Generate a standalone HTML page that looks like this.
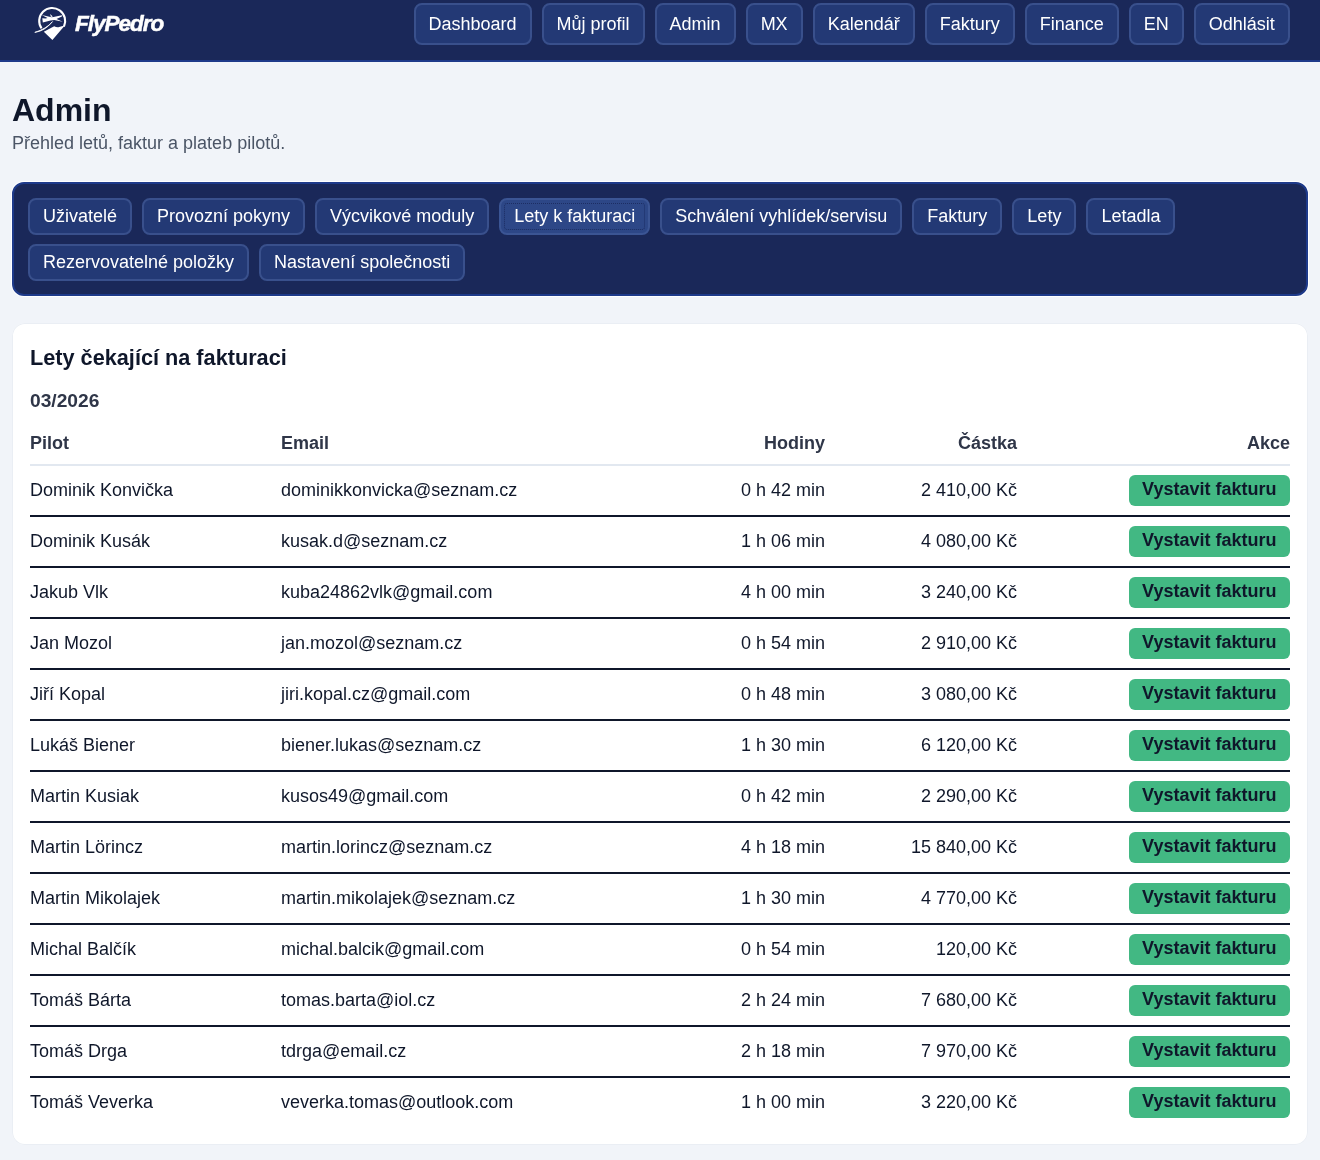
<!DOCTYPE html>
<html lang="cs">
<head>
<meta charset="utf-8">
<title>FlyPedro Admin</title>
<style>
*{box-sizing:border-box;}
html,body{margin:0;padding:0;}
body{width:1320px;height:1160px;overflow:hidden;background:#f1f4f9;font-family:"Liberation Sans",sans-serif;font-size:18px;color:#0f172a;position:relative;}
.hdr{position:absolute;left:0;top:0;width:1320px;height:62px;background:#1a2859;border-bottom:2px solid #1e3a8a;}
.logo{position:absolute;left:30px;top:2px;width:50px;height:44px;}
.brand{position:absolute;left:75px;top:10px;font-weight:bold;font-style:italic;font-size:22.5px;line-height:28px;color:#fff;letter-spacing:-1px;-webkit-text-stroke:0.5px #fff;}
.nav{position:absolute;right:30.2px;top:3px;display:flex;gap:10px;}
.btn{display:block;height:42px;padding:9px 13px;line-height:20px;border:2px solid #39508c;background:#233975;color:#fff;border-radius:8px;white-space:nowrap;}
h1{position:absolute;left:12px;top:92px;margin:0;font-size:32px;line-height:37px;font-weight:bold;color:#0f172a;}
.sub{position:absolute;left:12px;top:133px;margin:0;line-height:20px;color:#4b5566;}
.panel{position:absolute;left:12px;top:182px;width:1296px;height:114px;background:#1a2859;border:2px solid #1e3a8a;border-radius:12px;box-shadow:0 0 0 1px #fff;padding:14px 14px;}
.tabs{display:flex;flex-wrap:wrap;column-gap:10px;row-gap:9.4px;}
.tab{display:block;height:36.8px;padding:0 13px;line-height:32.8px;border:2px solid #39508c;background:#233975;color:#fff;border-radius:8px;white-space:nowrap;}
.tab.act{background:#2d4787;border-color:#3b5594;outline:1px dotted rgba(15,25,70,0.55);outline-offset:-6px;}
.card{position:absolute;left:12px;top:323px;width:1296px;height:822px;background:#fff;border-radius:13px;box-shadow:inset 0 0 0 1px #eaeef4;}
h2{position:absolute;left:18px;top:22px;margin:0;font-size:21.7px;line-height:25px;font-weight:bold;color:#0f172a;}
.period{position:absolute;left:18px;top:67.5px;margin:0;font-size:19.2px;line-height:20px;font-weight:bold;color:#2f3648;}
table{position:absolute;left:18px;top:99px;width:1260px;border-collapse:collapse;table-layout:fixed;}
th{font-weight:bold;color:#2f3648;text-align:left;height:43px;padding:0;line-height:20px;vertical-align:top;padding-top:11px;border-bottom:2px solid #e2e8f0;}
td{height:51px;padding:14px 0 0 0;line-height:20px;vertical-align:top;border-bottom:2px solid #0f172a;color:#0f172a;}
tr:last-child td{border-bottom:none;height:49px;}
.r{text-align:right;}
.go{display:inline-block;height:31px;line-height:20px;padding:4px 13.5px 0;margin-top:-5px;background:#42b883;color:#0f172a;font-weight:bold;border-radius:6px;vertical-align:middle;}
</style>
</head>
<body>
<div id="wrap" style="position:absolute;left:0;top:0;width:1320px;height:1160px;will-change:transform;">
<div class="hdr">
  <svg class="logo" viewBox="0 0 50 44" width="50" height="44">
    <path d="M11.55 26.46 A13 13 0 1 1 33.98 24.49" fill="none" stroke="#fff" stroke-width="2.1"/>
    <path d="M13.8 29.8 L24.2 24.2 Q26.8 25.6 29.2 25.0 Q31.6 24.4 34.8 23.6 L22.4 38.0 Z" fill="#fff"/>
    <path d="M4.8 30.4 Q14.8 29.2 22.5 19.6 Q16.8 26.6 4.8 30.4 Z" fill="#fff" stroke="#fff" stroke-width="0.8" stroke-linejoin="round"/>
    <path d="M31.9 13.3 L23.5 14.9 L21.5 15.2 L11.8 12.9 L17.5 16.0 L15.5 16.6 L12.3 16.2 L12.8 20.5 L20.5 18.6 L24.3 18.0 L32.8 19.7 L26.5 17.1 L31.9 14.4 Z" fill="#fff"/>
    <path d="M20.1 12.0 L22.8 14.6 L20.9 14.9 Z" fill="#fff"/>
  </svg>
  <div class="brand">FlyPedro</div>
  <div class="nav">
    <span class="btn">Dashboard</span><span class="btn">Můj profil</span><span class="btn">Admin</span><span class="btn">MX</span><span class="btn">Kalendář</span><span class="btn">Faktury</span><span class="btn">Finance</span><span class="btn">EN</span><span class="btn">Odhlásit</span>
  </div>
</div>
<h1>Admin</h1>
<p class="sub">Přehled letů, faktur a plateb pilotů.</p>
<div class="panel">
  <div class="tabs">
    <span class="tab">Uživatelé</span><span class="tab">Provozní pokyny</span><span class="tab">Výcvikové moduly</span><span class="tab act">Lety k fakturaci</span><span class="tab">Schválení vyhlídek/servisu</span><span class="tab">Faktury</span><span class="tab">Lety</span><span class="tab">Letadla</span><span class="tab">Rezervovatelné položky</span><span class="tab">Nastavení společnosti</span>
  </div>
</div>
<div class="card">
  <h2>Lety čekající na fakturaci</h2>
  <p class="period">03/2026</p>
  <table>
    <colgroup><col style="width:251px"><col style="width:345px"><col style="width:199px"><col style="width:192px"><col style="width:273px"></colgroup>
    <thead><tr><th>Pilot</th><th>Email</th><th class="r">Hodiny</th><th class="r">Částka</th><th class="r">Akce</th></tr></thead>
    <tbody>
<tr><td>Dominik Konvička</td><td>dominikkonvicka@seznam.cz</td><td class="r">0 h 42 min</td><td class="r">2&nbsp;410,00&nbsp;Kč</td><td class="r"><span class="go">Vystavit fakturu</span></td></tr>
<tr><td>Dominik Kusák</td><td>kusak.d@seznam.cz</td><td class="r">1 h 06 min</td><td class="r">4&nbsp;080,00&nbsp;Kč</td><td class="r"><span class="go">Vystavit fakturu</span></td></tr>
<tr><td>Jakub Vlk</td><td>kuba24862vlk@gmail.com</td><td class="r">4 h 00 min</td><td class="r">3&nbsp;240,00&nbsp;Kč</td><td class="r"><span class="go">Vystavit fakturu</span></td></tr>
<tr><td>Jan Mozol</td><td>jan.mozol@seznam.cz</td><td class="r">0 h 54 min</td><td class="r">2&nbsp;910,00&nbsp;Kč</td><td class="r"><span class="go">Vystavit fakturu</span></td></tr>
<tr><td>Jiří Kopal</td><td>jiri.kopal.cz@gmail.com</td><td class="r">0 h 48 min</td><td class="r">3&nbsp;080,00&nbsp;Kč</td><td class="r"><span class="go">Vystavit fakturu</span></td></tr>
<tr><td>Lukáš Biener</td><td>biener.lukas@seznam.cz</td><td class="r">1 h 30 min</td><td class="r">6&nbsp;120,00&nbsp;Kč</td><td class="r"><span class="go">Vystavit fakturu</span></td></tr>
<tr><td>Martin Kusiak</td><td>kusos49@gmail.com</td><td class="r">0 h 42 min</td><td class="r">2&nbsp;290,00&nbsp;Kč</td><td class="r"><span class="go">Vystavit fakturu</span></td></tr>
<tr><td>Martin Lörincz</td><td>martin.lorincz@seznam.cz</td><td class="r">4 h 18 min</td><td class="r">15&nbsp;840,00&nbsp;Kč</td><td class="r"><span class="go">Vystavit fakturu</span></td></tr>
<tr><td>Martin Mikolajek</td><td>martin.mikolajek@seznam.cz</td><td class="r">1 h 30 min</td><td class="r">4&nbsp;770,00&nbsp;Kč</td><td class="r"><span class="go">Vystavit fakturu</span></td></tr>
<tr><td>Michal Balčík</td><td>michal.balcik@gmail.com</td><td class="r">0 h 54 min</td><td class="r">120,00&nbsp;Kč</td><td class="r"><span class="go">Vystavit fakturu</span></td></tr>
<tr><td>Tomáš Bárta</td><td>tomas.barta@iol.cz</td><td class="r">2 h 24 min</td><td class="r">7&nbsp;680,00&nbsp;Kč</td><td class="r"><span class="go">Vystavit fakturu</span></td></tr>
<tr><td>Tomáš Drga</td><td>tdrga@email.cz</td><td class="r">2 h 18 min</td><td class="r">7&nbsp;970,00&nbsp;Kč</td><td class="r"><span class="go">Vystavit fakturu</span></td></tr>
<tr><td>Tomáš Veverka</td><td>veverka.tomas@outlook.com</td><td class="r">1 h 00 min</td><td class="r">3&nbsp;220,00&nbsp;Kč</td><td class="r"><span class="go">Vystavit fakturu</span></td></tr>
    </tbody>
  </table>
</div>
</div>
</body>
</html>
